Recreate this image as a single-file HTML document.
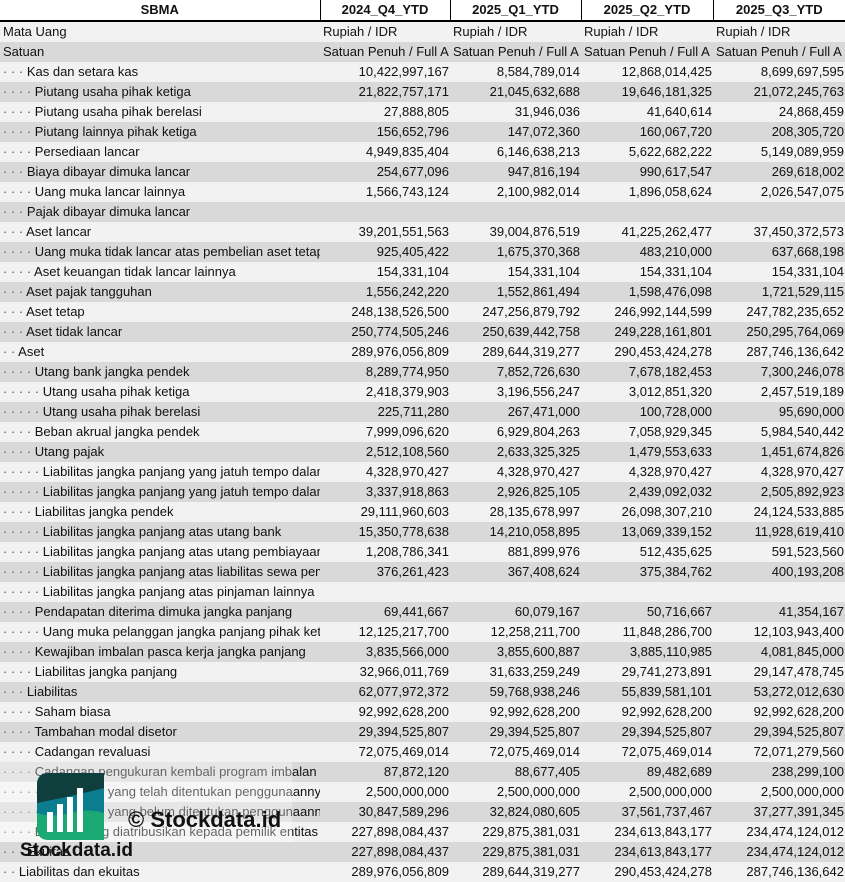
<!DOCTYPE html>
<html><head><meta charset="utf-8"><style>
body{margin:0;width:845px;height:881px;overflow:hidden;background:#f2f2f2;font-family:"Liberation Sans",Arial,sans-serif;font-size:13px;color:#111;position:relative}
table{border-collapse:collapse;table-layout:fixed;width:845px}
td{height:20px;padding:0 3px;white-space:nowrap;overflow:hidden;box-sizing:border-box;line-height:20px}
tr.h td{background:#fff;font-weight:bold;text-align:center;border-left:1px solid #000;border-bottom:2px solid #000;height:21px}
tr.h td:first-child{border-left:none}
tr:nth-child(even) td{background:#f2f2f2}
tr:nth-child(odd):not(.h) td{background:#d9d9d9}
td.n{text-align:right;padding-right:1px}
td.t{text-align:left;padding-left:3px;text-overflow:clip}
.d{color:#555}
.ov{position:absolute;left:0;top:762px;width:292px;height:80px;background:rgba(255,255,255,.35)}
</style></head><body>
<table>
<colgroup><col style="width:320px"><col style="width:130px"><col style="width:131px"><col style="width:132px"><col style="width:132px"></colgroup>
<tr class="h"><td>SBMA</td><td>2024_Q4_YTD</td><td>2025_Q1_YTD</td><td>2025_Q2_YTD</td><td>2025_Q3_YTD</td></tr>
<tr><td>Mata Uang</td><td class="t">Rupiah / IDR</td><td class="t">Rupiah / IDR</td><td class="t">Rupiah / IDR</td><td class="t">Rupiah / IDR</td></tr>
<tr><td>Satuan</td><td class="t">Satuan Penuh / Full A</td><td class="t">Satuan Penuh / Full A</td><td class="t">Satuan Penuh / Full A</td><td class="t">Satuan Penuh / Full A</td></tr>
<tr><td><span class="d">· · · </span>Kas dan setara kas</td><td class="n">10,422,997,167</td><td class="n">8,584,789,014</td><td class="n">12,868,014,425</td><td class="n">8,699,697,595</td></tr>
<tr><td><span class="d">· · · · </span>Piutang usaha pihak ketiga</td><td class="n">21,822,757,171</td><td class="n">21,045,632,688</td><td class="n">19,646,181,325</td><td class="n">21,072,245,763</td></tr>
<tr><td><span class="d">· · · · </span>Piutang usaha pihak berelasi</td><td class="n">27,888,805</td><td class="n">31,946,036</td><td class="n">41,640,614</td><td class="n">24,868,459</td></tr>
<tr><td><span class="d">· · · · </span>Piutang lainnya pihak ketiga</td><td class="n">156,652,796</td><td class="n">147,072,360</td><td class="n">160,067,720</td><td class="n">208,305,720</td></tr>
<tr><td><span class="d">· · · · </span>Persediaan lancar</td><td class="n">4,949,835,404</td><td class="n">6,146,638,213</td><td class="n">5,622,682,222</td><td class="n">5,149,089,959</td></tr>
<tr><td><span class="d">· · · </span>Biaya dibayar dimuka lancar</td><td class="n">254,677,096</td><td class="n">947,816,194</td><td class="n">990,617,547</td><td class="n">269,618,002</td></tr>
<tr><td><span class="d">· · · · </span>Uang muka lancar lainnya</td><td class="n">1,566,743,124</td><td class="n">2,100,982,014</td><td class="n">1,896,058,624</td><td class="n">2,026,547,075</td></tr>
<tr><td><span class="d">· · · </span>Pajak dibayar dimuka lancar</td><td></td><td></td><td></td><td></td></tr>
<tr><td><span class="d">· · · </span>Aset lancar</td><td class="n">39,201,551,563</td><td class="n">39,004,876,519</td><td class="n">41,225,262,477</td><td class="n">37,450,372,573</td></tr>
<tr><td><span class="d">· · · · </span>Uang muka tidak lancar atas pembelian aset tetap</td><td class="n">925,405,422</td><td class="n">1,675,370,368</td><td class="n">483,210,000</td><td class="n">637,668,198</td></tr>
<tr><td><span class="d">· · · · </span>Aset keuangan tidak lancar lainnya</td><td class="n">154,331,104</td><td class="n">154,331,104</td><td class="n">154,331,104</td><td class="n">154,331,104</td></tr>
<tr><td><span class="d">· · · </span>Aset pajak tangguhan</td><td class="n">1,556,242,220</td><td class="n">1,552,861,494</td><td class="n">1,598,476,098</td><td class="n">1,721,529,115</td></tr>
<tr><td><span class="d">· · · </span>Aset tetap</td><td class="n">248,138,526,500</td><td class="n">247,256,879,792</td><td class="n">246,992,144,599</td><td class="n">247,782,235,652</td></tr>
<tr><td><span class="d">· · · </span>Aset tidak lancar</td><td class="n">250,774,505,246</td><td class="n">250,639,442,758</td><td class="n">249,228,161,801</td><td class="n">250,295,764,069</td></tr>
<tr><td><span class="d">· · </span>Aset</td><td class="n">289,976,056,809</td><td class="n">289,644,319,277</td><td class="n">290,453,424,278</td><td class="n">287,746,136,642</td></tr>
<tr><td><span class="d">· · · · </span>Utang bank jangka pendek</td><td class="n">8,289,774,950</td><td class="n">7,852,726,630</td><td class="n">7,678,182,453</td><td class="n">7,300,246,078</td></tr>
<tr><td><span class="d">· · · · · </span>Utang usaha pihak ketiga</td><td class="n">2,418,379,903</td><td class="n">3,196,556,247</td><td class="n">3,012,851,320</td><td class="n">2,457,519,189</td></tr>
<tr><td><span class="d">· · · · · </span>Utang usaha pihak berelasi</td><td class="n">225,711,280</td><td class="n">267,471,000</td><td class="n">100,728,000</td><td class="n">95,690,000</td></tr>
<tr><td><span class="d">· · · · </span>Beban akrual jangka pendek</td><td class="n">7,999,096,620</td><td class="n">6,929,804,263</td><td class="n">7,058,929,345</td><td class="n">5,984,540,442</td></tr>
<tr><td><span class="d">· · · · </span>Utang pajak</td><td class="n">2,512,108,560</td><td class="n">2,633,325,325</td><td class="n">1,479,553,633</td><td class="n">1,451,674,826</td></tr>
<tr><td><span class="d">· · · · · </span>Liabilitas jangka panjang yang jatuh tempo dalam</td><td class="n">4,328,970,427</td><td class="n">4,328,970,427</td><td class="n">4,328,970,427</td><td class="n">4,328,970,427</td></tr>
<tr><td><span class="d">· · · · · </span>Liabilitas jangka panjang yang jatuh tempo dalam</td><td class="n">3,337,918,863</td><td class="n">2,926,825,105</td><td class="n">2,439,092,032</td><td class="n">2,505,892,923</td></tr>
<tr><td><span class="d">· · · · </span>Liabilitas jangka pendek</td><td class="n">29,111,960,603</td><td class="n">28,135,678,997</td><td class="n">26,098,307,210</td><td class="n">24,124,533,885</td></tr>
<tr><td><span class="d">· · · · · </span>Liabilitas jangka panjang atas utang bank</td><td class="n">15,350,778,638</td><td class="n">14,210,058,895</td><td class="n">13,069,339,152</td><td class="n">11,928,619,410</td></tr>
<tr><td><span class="d">· · · · · </span>Liabilitas jangka panjang atas utang pembiayaan</td><td class="n">1,208,786,341</td><td class="n">881,899,976</td><td class="n">512,435,625</td><td class="n">591,523,560</td></tr>
<tr><td><span class="d">· · · · · </span>Liabilitas jangka panjang atas liabilitas sewa pembiayaan</td><td class="n">376,261,423</td><td class="n">367,408,624</td><td class="n">375,384,762</td><td class="n">400,193,208</td></tr>
<tr><td><span class="d">· · · · · </span>Liabilitas jangka panjang atas pinjaman lainnya</td><td></td><td></td><td></td><td></td></tr>
<tr><td><span class="d">· · · · </span>Pendapatan diterima dimuka jangka panjang</td><td class="n">69,441,667</td><td class="n">60,079,167</td><td class="n">50,716,667</td><td class="n">41,354,167</td></tr>
<tr><td><span class="d">· · · · · </span>Uang muka pelanggan jangka panjang pihak ketiga</td><td class="n">12,125,217,700</td><td class="n">12,258,211,700</td><td class="n">11,848,286,700</td><td class="n">12,103,943,400</td></tr>
<tr><td><span class="d">· · · · </span>Kewajiban imbalan pasca kerja jangka panjang</td><td class="n">3,835,566,000</td><td class="n">3,855,600,887</td><td class="n">3,885,110,985</td><td class="n">4,081,845,000</td></tr>
<tr><td><span class="d">· · · · </span>Liabilitas jangka panjang</td><td class="n">32,966,011,769</td><td class="n">31,633,259,249</td><td class="n">29,741,273,891</td><td class="n">29,147,478,745</td></tr>
<tr><td><span class="d">· · · </span>Liabilitas</td><td class="n">62,077,972,372</td><td class="n">59,768,938,246</td><td class="n">55,839,581,101</td><td class="n">53,272,012,630</td></tr>
<tr><td><span class="d">· · · · </span>Saham biasa</td><td class="n">92,992,628,200</td><td class="n">92,992,628,200</td><td class="n">92,992,628,200</td><td class="n">92,992,628,200</td></tr>
<tr><td><span class="d">· · · · </span>Tambahan modal disetor</td><td class="n">29,394,525,807</td><td class="n">29,394,525,807</td><td class="n">29,394,525,807</td><td class="n">29,394,525,807</td></tr>
<tr><td><span class="d">· · · · </span>Cadangan revaluasi</td><td class="n">72,075,469,014</td><td class="n">72,075,469,014</td><td class="n">72,075,469,014</td><td class="n">72,071,279,560</td></tr>
<tr><td><span class="d">· · · · </span>Cadangan pengukuran kembali program imbalan</td><td class="n">87,872,120</td><td class="n">88,677,405</td><td class="n">89,482,689</td><td class="n">238,299,100</td></tr>
<tr><td><span class="d">· · · · · </span>Saldo laba yang telah ditentukan penggunaannya</td><td class="n">2,500,000,000</td><td class="n">2,500,000,000</td><td class="n">2,500,000,000</td><td class="n">2,500,000,000</td></tr>
<tr><td><span class="d">· · · · · </span>Saldo laba yang belum ditentukan penggunaannya</td><td class="n">30,847,589,296</td><td class="n">32,824,080,605</td><td class="n">37,561,737,467</td><td class="n">37,277,391,345</td></tr>
<tr><td><span class="d">· · · · </span>Ekuitas yang diatribusikan kepada pemilik entitas</td><td class="n">227,898,084,437</td><td class="n">229,875,381,031</td><td class="n">234,613,843,177</td><td class="n">234,474,124,012</td></tr>
<tr><td><span class="d">· · · </span>Ekuitas</td><td class="n">227,898,084,437</td><td class="n">229,875,381,031</td><td class="n">234,613,843,177</td><td class="n">234,474,124,012</td></tr>
<tr><td><span class="d">· · </span>Liabilitas dan ekuitas</td><td class="n">289,976,056,809</td><td class="n">289,644,319,277</td><td class="n">290,453,424,278</td><td class="n">287,746,136,642</td></tr>
</table>
<div class="ov"></div>
<svg style="position:absolute;left:37px;top:773px" width="67" height="67" viewBox="0 0 67 67">
<path d="M0 12 Q0 0 12 0 H67 V67 H12 Q0 67 0 55Z" fill="#1aa874"/>
<path d="M0 12 Q0 0 12 0 H67 V40 Q50 35 33 40 Q15 45 0 40Z" fill="#0a7d8f"/>
<path d="M0 12 Q0 0 12 0 H67 V15 Q40 22 0 30Z" fill="#0e3f3c"/>
<rect x="10" y="39" width="6" height="20" fill="#fff"/>
<rect x="20" y="31" width="6" height="28" fill="#fff"/>
<rect x="30" y="24" width="6" height="35" fill="#fff"/>
<rect x="40" y="15" width="6" height="44" fill="#fff"/>
</svg>
<div style="position:absolute;left:128px;top:807px;font-weight:bold;font-size:22px;color:#111">© Stockdata.id</div>
<div style="position:absolute;left:20px;top:840px;font-weight:bold;font-size:19px;color:#111">Stockdata.id</div>
</body></html>
